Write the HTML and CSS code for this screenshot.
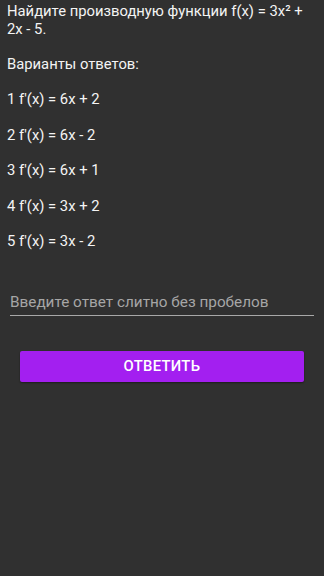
FILE: index.html
```html
<!DOCTYPE html>
<html>
<head>
  <meta charset="utf-8">
  <title>Производная</title>
  <link rel="stylesheet" href="styles.css">
</head>
<body>
  <div class="screen">
    <div class="question">
      <p>Найдите производную функции f(x) = 3x² + 2x - 5.</p>
      <p>Варианты ответов:</p>
      <p>1 f'(x) = 6x + 2</p>
      <p>2 f'(x) = 6x - 2</p>
      <p>3 f'(x) = 6x + 1</p>
      <p>4 f'(x) = 3x + 2</p>
      <p>5 f'(x) = 3x - 2</p>
    </div>

    <div class="answer">
      <input type="text" class="answer-input" placeholder="Введите ответ слитно без пробелов">
    </div>

    <button class="submit">ОТВЕТИТЬ</button>
  </div>
</body>
</html>
```

FILE: styles.css
```css
html, body {
  margin: 0;
  padding: 0;
  background: #303030;
}

body {
  font-family: Roboto, "Noto Sans", sans-serif;
  color: #ffffff;
  width: 324px;
  height: 576px;
  overflow: hidden;
}

.screen {
  padding: 3px 10px 0 7px;
}

.question {
  font-size: 14.8px;
  line-height: 17.7px;
  color: #f4f4f4;
}

.question p {
  margin: 0 0 17.7px 0;
}

.answer {
  margin: 42px 0 0 3px;
}

.answer-input {
  display: block;
  width: 100%;
  box-sizing: border-box;
  background: transparent;
  border: none;
  border-bottom: 1px solid #a8a8a8;
  padding: 0 0 4px 0;
  font-family: Roboto, "Noto Sans", sans-serif;
  font-size: 15.3px;
  color: #ffffff;
  outline: none;
}

.answer-input::placeholder {
  color: #a6a6a6;
}

.submit {
  display: block;
  margin: 35px 0 0 13px;
  width: 284px;
  height: 31px;
  border: none;
  border-radius: 2px;
  background: #a31ff0;
  color: #ffffff;
  font-family: Roboto, "Noto Sans", sans-serif;
  font-weight: 500;
  font-size: 14.8px;
  letter-spacing: 0.3px;
  box-shadow: 0 1px 2px rgba(0, 0, 0, 0.4);
}
```
